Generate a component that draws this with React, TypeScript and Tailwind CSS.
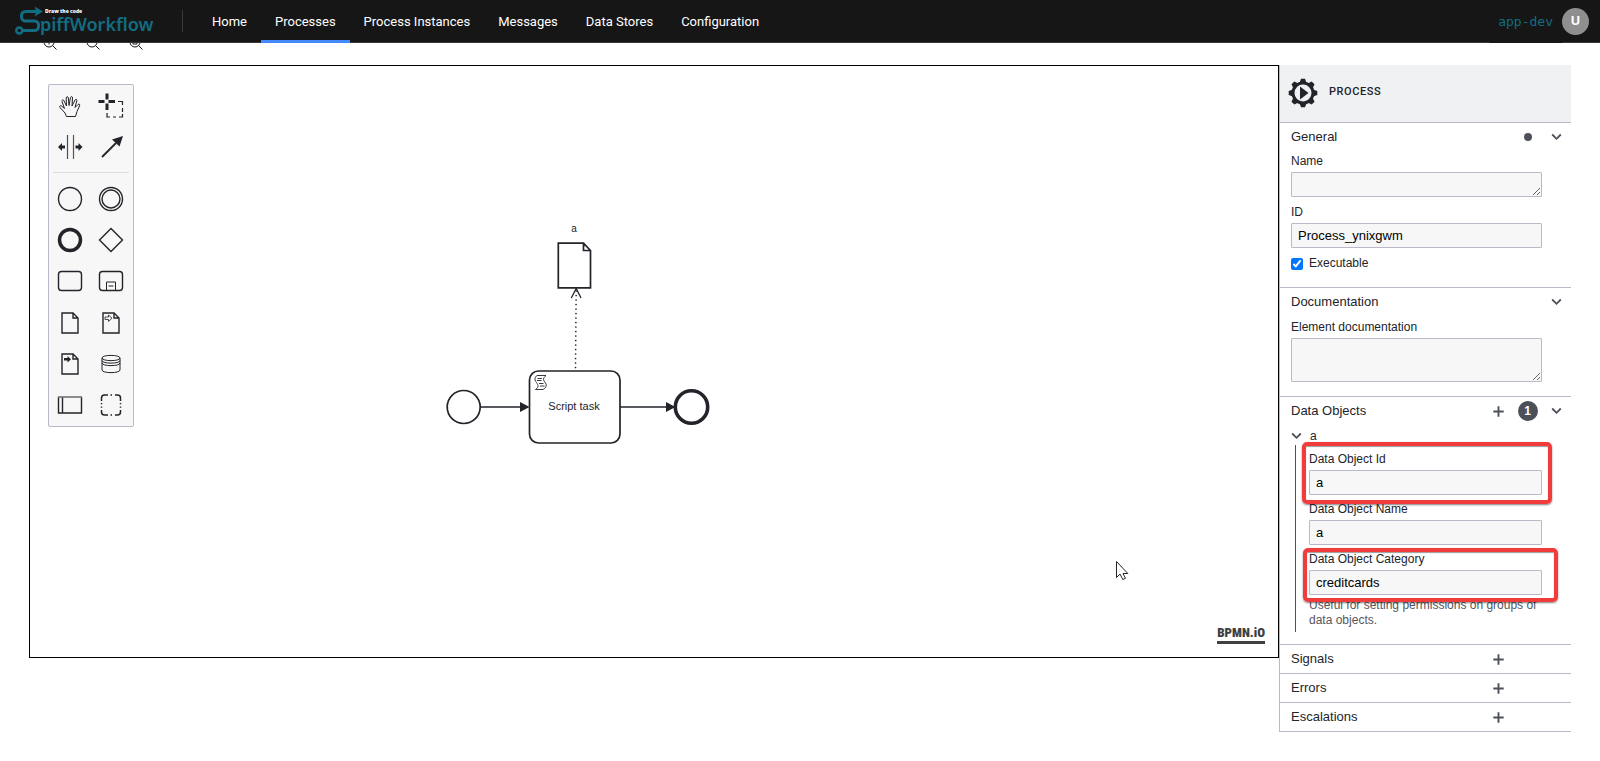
import { useState } from "react";
import type { ReactNode } from "react";

const INK = "#22242a";

function Logo() {
  return (
    <svg width="139" height="32" viewBox="0 0 139 32" role="img" aria-label="SpiffWorkflow">
      <g fill="none" stroke="#126d82" strokeWidth="3">
        <path d="M22 6.500H10.500a4 4 0 0 0-4 4v1.500a4 4 0 0 0 4 4H19.500a4 4 0 0 1 4 4v1.500a4 4 0 0 1-4 4H8" />
        <circle cx="4.300" cy="25.500" r="3" strokeWidth="2.500" />
      </g>
      <path d="M19.500 1.500 28 6.500 19.500 11.500 21.500 6.500z" fill="#126d82" />
      <text x="30" y="8" fontSize="5" fontWeight="800" fill="#fff" fontFamily="Open Sans, sans-serif">
        Draw the code
      </text>
      <text x="25" y="26" fontSize="18" fontWeight="600" fill="#126d82" fontFamily="Noto Sans, sans-serif">
        piffWorkflow
      </text>
    </svg>
  );
}

const navItems = ["Home", "Processes", "Process Instances", "Messages", "Data Stores", "Configuration"];

function Header() {
  return (
    <header className="relative z-10 flex h-[43px] items-stretch border-b border-[#393939] bg-[#161616] pl-[15px] pr-[11px]">
      <a href="#home" className="flex items-center">
        <Logo />
      </a>
      <div className="ml-7 mr-[15px] h-[22px] w-px self-center bg-[#393939]" />
      <nav className="-mb-px flex flex-1 font-['Roboto',sans-serif] text-[13px] text-white">
        {navItems.map((item) => (
          <a
            key={item}
            href={"#" + item}
            className={
              item === "Processes"
                ? "flex items-center border-y-[3px] border-t-transparent border-b-[#4589ff] px-[14px]"
                : "mb-px flex items-center border-t border-transparent px-[14px]"
            }
          >
            {item}
          </a>
        ))}
      </nav>
      <a
        href="#env"
        className="-mb-px flex items-center bg-[#161616] px-[9px] font-['DejaVu_Sans_Mono',monospace] text-[13px] text-[#126d82]"
      >
        app-dev
      </a>
      <button
        type="button"
        aria-label="User menu"
        className="flex size-[27px] items-center justify-center self-center rounded-full bg-[#8f8f8f] font-['Noto_Sans',sans-serif] text-[13px] font-bold text-white"
      >
        U
      </button>
    </header>
  );
}

function ZoomIcon({ mark }: { mark: string }) {
  return (
    <svg width="14" height="14" viewBox="0 0 14 14" fill="none" stroke="#161616">
      <circle cx="6" cy="6" r="5" />
      <path d="M9.500 9.500 13.500 13.500" />
      <path d={mark} />
    </svg>
  );
}

const zoomTools = [
  { label: "Zoom in", mark: "M3.500 6h5M6 3.500v5" },
  { label: "Zoom out", mark: "M3.500 6h5" },
  { label: "Fit view", mark: "M4 8V4h4v4z" },
];

function Glyph({ children }: { children: ReactNode }) {
  return (
    <svg width="26" height="26" viewBox="0 0 26 26" fill="none" stroke={INK} strokeWidth="1.400">
      {children}
    </svg>
  );
}

const pageOutline = "M5 3H16L21 8V23H5zM16 3V8H21";

const tools = [
  {
    label: "Hand tool",
    glyph: (
      <path
        strokeWidth="1"
        strokeLinejoin="round"
        d="M9.500 23.500 8 20 3 14.500C2 13.200 3.300 12.200 4.500 13L7.500 15.500 5 8.500C4.500 6.800 6.500 6.300 7 7.800L9.500 13 9.200 5C9.200 3.300 11.200 3.300 11.400 5L12 12.500 13.500 4.500C13.900 3 15.700 3.400 15.500 5L15 13 18 7C18.800 5.600 20.300 6.500 19.800 7.800L18 14.500 21 11.500C22.200 10.500 23.300 11.700 22.500 13L20 18.500 18.500 23.500z"
      />
    ),
  },
  {
    label: "Lasso tool",
    glyph: (
      <>
        <path strokeWidth="3" d="M0.500 8.500H6.500M10.500 8.500H17M9 0.500V6.500M9 10.500V17" />
        <path strokeWidth="1.200" d="M20 8.500H24.500V12M24.500 15v4M24.500 21v3H21M18 24h-3M12 24H9V20" />
      </>
    ),
  },
  {
    label: "Space tool",
    glyph: (
      <>
        <path stroke="#43467f" strokeWidth="1.200" d="M10.500 1V25" />
        <path stroke="#7f4340" strokeWidth="1.200" d="M16.500 1V25" />
        <path fill={INK} stroke="none" d="M1 13 5 9v2.500h3v3H5V17zM25.500 13 21.500 9v2.500h-3v3h3V17z" />
      </>
    ),
  },
  {
    label: "Connect tool",
    glyph: (
      <>
        <path strokeWidth="1.800" d="M4 23 18 9" />
        <path fill={INK} stroke="none" d="M25 2 21.500 12.500 14 5.500z" />
      </>
    ),
  },
  { label: "Create start event", glyph: <circle cx="13" cy="13" r="11.500" /> },
  {
    label: "Create intermediate event",
    glyph: (
      <>
        <circle cx="13" cy="13" r="11.500" />
        <circle cx="13" cy="13" r="9" />
      </>
    ),
  },
  { label: "Create end event", glyph: <circle cx="13" cy="13" r="10.500" strokeWidth="3.500" /> },
  { label: "Create gateway", glyph: <path d="M13 1.500 24.500 13 13 24.500 1.500 13z" /> },
  { label: "Create task", glyph: <rect x="1.500" y="3.500" width="23" height="19" rx="3" /> },
  {
    label: "Create expanded sub-process",
    glyph: (
      <>
        <rect x="1.500" y="3.500" width="23" height="19" rx="3" />
        <path strokeWidth="1" d="M8.500 22.500V14H17.500V22.500M10.500 18h5" />
      </>
    ),
  },
  { label: "Create data object", glyph: <path d={pageOutline} /> },
  {
    label: "Create data input",
    glyph: (
      <>
        <path d={pageOutline} />
        <path strokeWidth="0.800" d="M7 7h3.500V5l3.500 3.200L10.500 11.500V9.500H7z" />
      </>
    ),
  },
  {
    label: "Create data output",
    glyph: (
      <>
        <path d={pageOutline} />
        <path fill={INK} stroke="none" d="M7 7h3.500V5l3.500 3.200L10.500 11.500V9.500H7z" />
      </>
    ),
  },
  {
    label: "Create data store",
    glyph: (
      <path
        strokeWidth="1"
        d="M4 7C4 3.500 22 3.500 22 7V19C22 22.500 4 22.500 4 19zM4 7C4 10.500 22 10.500 22 7M4 9.500C4 13 22 13 22 9.500M4 12C4 15.500 22 15.500 22 12"
      />
    ),
  },
  {
    label: "Create pool",
    glyph: (
      <>
        <path d="M1.500 5V21H24.500V5M5.500 5V21" />
        <path stroke="#6f7075" strokeWidth="1.600" d="M1 5H25" />
      </>
    ),
  },
  {
    label: "Create group",
    glyph: (
      <path
        strokeWidth="1.500"
        d="M3.500 9V6a3 3 0 0 1 3-3H10M3.500 18v2a3 3 0 0 0 3 3H10M22.500 9V6a3 3 0 0 0-3-3H17M22.500 18v2a3 3 0 0 1-3 3H17M12.500 3h1.500M12.500 23h1.500M3.500 11v1.200M3.500 14.500v1.200M22.500 11v1.200M22.500 14.500v1.200"
      />
    ),
  },
];

function ToolButton({ label, glyph }: { label: string; glyph: ReactNode }) {
  return (
    <button type="button" aria-label={label} className="flex items-center justify-center">
      <Glyph>{glyph}</Glyph>
    </button>
  );
}

function Palette() {
  return (
    <div className="absolute left-[18px] top-[18px] w-[86px] rounded-[2px] border border-[#b9b9c9] bg-[#f7f7f7]">
      <div className="grid h-[82px] w-[82px] grid-cols-2 grid-rows-2">
        {tools.slice(0, 4).map((t) => (
          <ToolButton key={t.label} {...t} />
        ))}
      </div>
      <hr className="mx-1 my-[5px] border-[#dddddd]" />
      <div className="grid h-[248px] w-[82px] grid-cols-2 grid-rows-6">
        {tools.slice(4).map((t) => (
          <ToolButton key={t.label} {...t} />
        ))}
      </div>
    </div>
  );
}

function Diagram() {
  return (
    <svg className="h-full w-full" fontFamily="Liberation Sans, Arial, sans-serif">
      <g transform="translate(-30 -66)" fill="none" stroke={INK} strokeWidth="1.700">
        <text x="574" y="232" textAnchor="middle" fontSize="10" fill={INK} stroke="none">
          a
        </text>
        <path d="M558.300 243.200H583.500L590.500 250.500V287.800H558.300zM583.500 243.200V250.500H590.500" />
        <path d="M575.500 367.500 576.200 290" strokeDasharray="0 4.500" strokeLinecap="round" />
        <path d="M571.300 298 576.200 288.500 581 298" strokeWidth="1.300" />
        <circle cx="463.700" cy="407" r="16.500" />
        <path d="M480.500 407H522M620 407H668" />
        <path d="M529.500 407 520 402V412zM675.500 407 666 402V412z" fill={INK} stroke="none" />
        <rect x="529.500" y="371" width="90.500" height="72" rx="9" />
        <circle cx="691.500" cy="407" r="16.200" strokeWidth="3.600" />
        <path
          d="M537 375.500H546C542.500 378.500 543 380 545.500 383 547.500 386 545 388.500 543 389.500H535.500C539 387 538.500 385.500 536.500 382.500 533.500 379 535.500 376.500 537 375.500zM537.500 378.500h4.500M537 380.500h4.500M539 383.500h4.500M540 386h4.500"
          strokeWidth="0.900"
        />
        <text x="574" y="410" textAnchor="middle" fontSize="11" fill={INK} stroke="none">
          Script task
        </text>
        <path
          d="M1116.500 561.500V577.500L1120 574 1122.800 579.500 1125.500 578.300 1123 573.500H1127.800z"
          fill="#fff"
          strokeWidth="1"
        />
      </g>
    </svg>
  );
}

function Canvas() {
  return (
    <section className="relative h-[593px] min-w-0 flex-1 border border-black bg-white">
      <Diagram />
      <Palette />
      <a
        href="#bpmn-io"
        className="absolute bottom-[13px] right-[13px] border-b-[3px] border-[#404040] font-['Roboto_Condensed','Roboto',sans-serif] text-[13px] font-black leading-[17px] text-[#404040]"
      >
        BPMN.iO
      </a>
    </section>
  );
}

function Chevron() {
  return (
    <svg width="11" height="8" viewBox="0 0 11 8" fill="none" stroke="#4c5059" strokeWidth="1.800">
      <path d="M1.200 1.500 5.500 5.800 9.800 1.500" />
    </svg>
  );
}

function Plus() {
  return (
    <svg width="11" height="11" viewBox="0 0 11 11" fill="none" stroke="#4c5059" strokeWidth="1.900">
      <path d="M5.500 0.300V10.700M0.300 5.500H10.700" />
    </svg>
  );
}

type GroupProps = { title: string; add?: boolean; badge?: ReactNode; children?: ReactNode };

function Group({ title, add, badge, children }: GroupProps) {
  const [open, setOpen] = useState(true);
  return (
    <section className="border-b border-[#b9b9c9]">
      <div className="grid h-7 grid-cols-[1fr_29px_29px_29px] items-center justify-items-center">
        <h2 className="justify-self-start pl-[11px] text-[13px] leading-[18px]">{title}</h2>
        {add ? (
          <button type="button" aria-label={"Add to " + title}>
            <Plus />
          </button>
        ) : (
          <span />
        )}
        {badge ?? <span />}
        {children && (
          <button type="button" aria-label={"Toggle " + title} onClick={() => setOpen(!open)}>
            <Chevron />
          </button>
        )}
      </div>
      {children && open && <div className="pl-[11px] pr-[29px]">{children}</div>}
    </section>
  );
}

const control =
  "block w-full rounded-[1px] border border-[#b9b9c9] bg-[#f7f7f7] px-[6px] text-[13px] text-black outline-none";

type FieldProps = { id: string; label: string; value?: string; multiline?: "short" | "tall"; children?: ReactNode };

function Field({ id, label, value = "", multiline, children }: FieldProps) {
  return (
    <div className="relative">
      <label htmlFor={id} className="mb-[2px] block leading-[18px]">
        {label}
      </label>
      {multiline ? (
        <textarea id={id} defaultValue={value} className={control + (multiline === "tall" ? " h-11" : " h-[25px]")} />
      ) : (
        <input id={id} type="text" defaultValue={value} className={control + " h-[25px]"} />
      )}
      {children}
    </div>
  );
}

const highlight =
  "pointer-events-none absolute rounded-[5px] border-4 border-[#f23c3c] shadow-[0_1px_2px_rgba(0,0,0,0.5),inset_0_1px_1px_rgba(0,0,0,0.4)]";

function ProcessIcon() {
  return (
    <svg width="30" height="30" viewBox="-15 -15 30 30" fill={INK}>
      <circle r="10" fill="none" stroke={INK} strokeWidth="3" />
      {[0, 45, 90, 135, 180, 225, 270, 315].map((a) => (
        <path key={a} transform={"rotate(" + a + ")"} d="M-3.500-10-2-14.300H2L3.500-10z" />
      ))}
      <path d="M-3-6.500 5.500 0-3 6.500z" />
    </svg>
  );
}

function PropertiesPanel() {
  return (
    <aside className="w-[292px] shrink-0 border-l border-[#b9b9c9] bg-white text-[12px] text-[#22242a]">
      <div className="flex h-[58px] items-center gap-[11px] border-b border-[#b9b9c9] bg-[#f0f1f3] pb-[2px] pl-2">
        <ProcessIcon />
        <span className="font-['Roboto',sans-serif] text-[11px] font-medium tracking-wider">PROCESS</span>
      </div>
      <Group title="General" badge={<span className="size-2 rounded-full bg-[#4c5059]" />}>
        <div className="flex flex-col gap-[6px] pb-[15px] pt-px">
          <Field id="name" label="Name" multiline="short" />
          <Field id="process-id" label="ID" value="Process_ynixgwm" />
          <div className="flex h-[18px] items-center gap-[6px]">
            <input id="executable" type="checkbox" defaultChecked className="mt-[2px] size-3" />
            <label htmlFor="executable" className="leading-[18px]">
              Executable
            </label>
          </div>
        </div>
      </Group>
      <Group title="Documentation">
        <div className="pb-[14px] pt-[2px]">
          <Field id="documentation" label="Element documentation" multiline="tall" />
        </div>
      </Group>
      <Group
        title="Data Objects"
        add
        badge={
          <span className="flex size-5 items-center justify-center rounded-full bg-[#4c5059] text-[12px] font-bold text-white">
            1
          </span>
        }
      >
        <div className="pt-[2px]">
          <button type="button" className="flex h-[18px] items-center gap-2 leading-[18px]">
            <Chevron />a
          </button>
        </div>
        <div className="mb-3 ml-1 flex flex-col gap-[5px] border-l border-[#4c5059] pb-1 pl-[13px] pt-[5px]">
          <Field id="object-id" label="Data Object Id" value="a">
            <div className={highlight + " -bottom-[9px] -left-[7px] -right-[10px] -top-2"} />
          </Field>
          <Field id="object-name" label="Data Object Name" value="a" />
          <Field id="object-category" label="Data Object Category" value="creditcards">
            <div className={highlight + " -bottom-[7px] -left-[6px] -right-4 -top-[2px]"} />
          </Field>
          <p className="-mt-[2px] leading-[15px] text-[#55565f]">
            Useful for setting permissions on groups of data objects.
          </p>
        </div>
      </Group>
      <Group title="Signals" add />
      <Group title="Errors" add />
      <Group title="Escalations" add />
    </aside>
  );
}

export default function App() {
  return (
    <div className="min-h-screen bg-white font-['Liberation_Sans',Arial,sans-serif]">
      <Header />
      <main className="px-[29px]">
        <div className="-mt-[7px] mb-[15px] flex h-[14px] gap-[29px] pl-[14px]">
          {zoomTools.map((tool) => (
            <button key={tool.label} type="button" aria-label={tool.label}>
              <ZoomIcon mark={tool.mark} />
            </button>
          ))}
        </div>
        <div className="flex items-start">
          <Canvas />
          <PropertiesPanel />
        </div>
      </main>
    </div>
  );
}
